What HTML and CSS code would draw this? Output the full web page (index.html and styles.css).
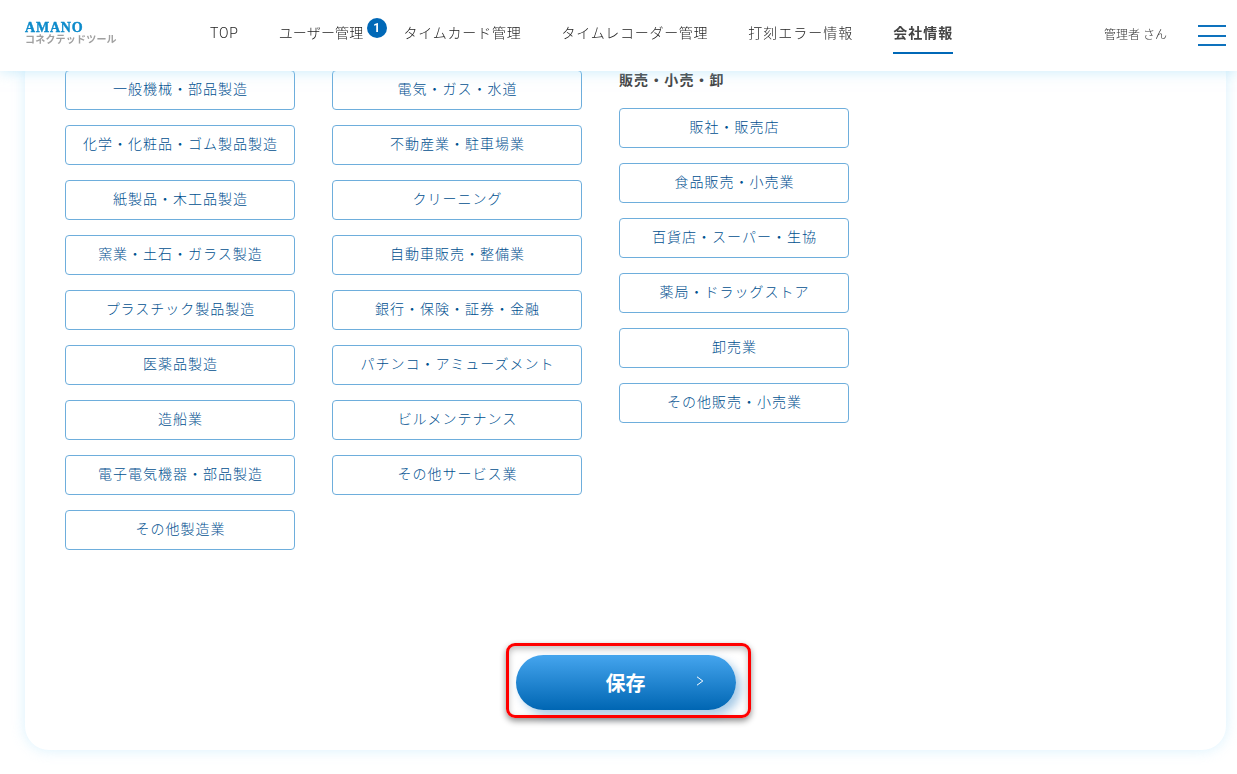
FILE: index.html
```html
<!DOCTYPE html>
<html lang="ja">
<head>
<meta charset="utf-8">
<title>会社情報</title>
<link rel="stylesheet" href="styles.css">
</head>
<body>
<header class="site-header">
  <a class="logo" href="#">
    <span class="logo-main">AMANO</span>
    <span class="logo-sub">コネクテッドツール</span>
  </a>
  <nav class="nav">
    <a class="nav-item" href="#">TOP</a>
    <a class="nav-item nav-badged" href="#">ユーザー管理<span class="badge">1</span></a>
    <a class="nav-item" href="#">タイムカード管理</a>
    <a class="nav-item nav-long" href="#">タイムレコーダー管理</a>
    <a class="nav-item nav-wide" href="#">打刻エラー情報</a>
    <a class="nav-item nav-wide is-active" href="#">会社情報</a>
  </nav>
  <div class="user">管理者 さん</div>
  <button class="menu" aria-label="メニュー"><span></span><span></span><span></span></button>
</header>
<main class="card">
  <div class="columns">
    <div class="col col-a">
      <a class="option" href="#">一般機械・部品製造</a>
      <a class="option" href="#">化学・化粧品・ゴム製品製造</a>
      <a class="option" href="#">紙製品・木工品製造</a>
      <a class="option" href="#">窯業・土石・ガラス製造</a>
      <a class="option" href="#">プラスチック製品製造</a>
      <a class="option" href="#">医薬品製造</a>
      <a class="option" href="#">造船業</a>
      <a class="option" href="#">電子電気機器・部品製造</a>
      <a class="option" href="#">その他製造業</a>
    </div>
    <div class="col col-b">
      <a class="option" href="#">電気・ガス・水道</a>
      <a class="option" href="#">不動産業・駐車場業</a>
      <a class="option" href="#">クリーニング</a>
      <a class="option" href="#">自動車販売・整備業</a>
      <a class="option" href="#">銀行・保険・証券・金融</a>
      <a class="option" href="#">パチンコ・アミューズメント</a>
      <a class="option" href="#">ビルメンテナンス</a>
      <a class="option" href="#">その他サービス業</a>
    </div>
    <div class="col col-a">
      <h3 class="col-title">販売・小売・卸</h3>
      <a class="option" href="#">販社・販売店</a>
      <a class="option" href="#">食品販売・小売業</a>
      <a class="option" href="#">百貨店・スーパー・生協</a>
      <a class="option" href="#">薬局・ドラッグストア</a>
      <a class="option" href="#">卸売業</a>
      <a class="option" href="#">その他販売・小売業</a>
    </div>
  </div>
  <div class="actions">
    <div class="save-wrap">
      <button class="save">保存
        <svg class="save-arrow" viewBox="0 0 8 10" width="8" height="10"><path d="M1 .8 6.8 5 1 9.2" fill="none" stroke="#fff" stroke-width="1"/></svg>
      </button>
      <div class="highlight"></div>
    </div>
  </div>
</main>
</body>
</html>
```
FILE: styles.css
```css
* { box-sizing: border-box; }
html, body { height: 100%; }
body {
  margin: 0;
  height: 774px;
  overflow: hidden;
  background: #fff;
  color: #333;
  font-family: Roboto, "Noto Sans CJK JP", sans-serif;
  font-size: 14px;
  padding: 50px 11px 24px 25px;
}
a { text-decoration: none; color: inherit; }

.site-header {
  position: fixed;
  top: 0; left: 0; right: 0;
  height: 71px;
  z-index: 10;
  background: #fff;
  box-shadow: 0 0 14px rgba(150, 215, 245, .55);
  display: flex;
  align-items: center;
  padding: 0 11px 0 25px;
}
.logo { display: flex; flex-direction: column; width: 185px; margin-top: -3px; }
.logo-main {
  font-family: "Liberation Serif", serif;
  font-weight: 700;
  font-size: 14px;
  line-height: 12px;
  letter-spacing: .8px;
  color: #0d8bcb;
  -webkit-text-stroke: .4px #0d8bcb;
}
.logo-sub {
  font-size: 10px;
  line-height: 12px;
  font-weight: 700;
  color: #a0a0a0;
  letter-spacing: .2px;
}
.nav { display: flex; gap: 40px; flex: 1; align-self: stretch; align-items: flex-start; }
.nav-item {
  position: relative;
  font-size: 14px;
  font-weight: 300;
  letter-spacing: .8px;
  line-height: 38px;
  height: 40px;
  margin-top: 14px;
  color: #222;
}
.nav-badged { letter-spacing: .17px; }
.nav-long { letter-spacing: .7px; }
.nav-wide { letter-spacing: 1px; }
.badge {
  position: absolute;
  top: 4px;
  left: 88px;
  width: 20px;
  height: 20px;
  border-radius: 50%;
  background: #0068b7;
  color: #fff;
  font-size: 12px;
  font-weight: 700;
  line-height: 20px;
  text-align: center;
  letter-spacing: 0;
}
.is-active { font-weight: 700; color: #444; border-bottom: 2px solid #0068b7; }
.user { font-size: 12px; font-weight: 300; color: #333; margin: 0 31px 4px 0; }
.menu {
  width: 28px;
  height: 21px;
  padding: 0;
  border: 0;
  background: none;
  display: flex;
  flex-direction: column;
  justify-content: space-between;
}
.menu span { display: block; height: 2px; background: #0e72bd; }

.card {
  width: 1201px;
  height: 700px;
  background: #fff;
  border-radius: 24px;
  box-shadow: 0 0 14px rgba(170, 225, 250, .45);
  padding: 20px 40px 0;
  display: flex;
  flex-direction: column;
}
.columns { display: flex; gap: 37px; height: 500px; }
.col { display: flex; flex-direction: column; gap: 15px; }
.col-a { width: 230px; }
.col-b { width: 250px; }
.col-title {
  margin: 0 0 3px;
  font-size: 14px;
  line-height: 20px;
  font-weight: 700;
  letter-spacing: 1.1px;
  color: #444;
}
.option {
  display: flex;
  align-items: center;
  justify-content: center;
  height: 40px;
  padding: 0 0 4px 1px;
  border: 1px solid #6eaedc;
  border-radius: 4px;
  color: #00508f;
  font-size: 14px;
  font-weight: 300;
  letter-spacing: 1px;
}
.actions { display: flex; justify-content: center; margin-top: 85px; }
.save-wrap { position: relative; }
.save {
  position: relative;
  display: block;
  width: 220px;
  height: 55px;
  padding: 0;
  border: 0;
  border-radius: 28px;
  background: linear-gradient(#45a5ee, #0066b3);
  box-shadow: 5px 5px 10px rgba(0, 104, 183, .35);
  color: #fff;
  font-family: inherit;
  font-size: 20px;
  font-weight: 700;
}
.save-arrow { position: absolute; right: 32px; top: 21px; }
.highlight {
  position: absolute;
  top: -12px;
  right: -15px;
  bottom: -8px;
  left: -10px;
  border: 3px solid #f00;
  border-radius: 9px;
  box-shadow: 0 3px 6px rgba(0, 0, 0, .45), inset 0 3px 6px rgba(0, 0, 0, .25);
  pointer-events: none;
}
```
